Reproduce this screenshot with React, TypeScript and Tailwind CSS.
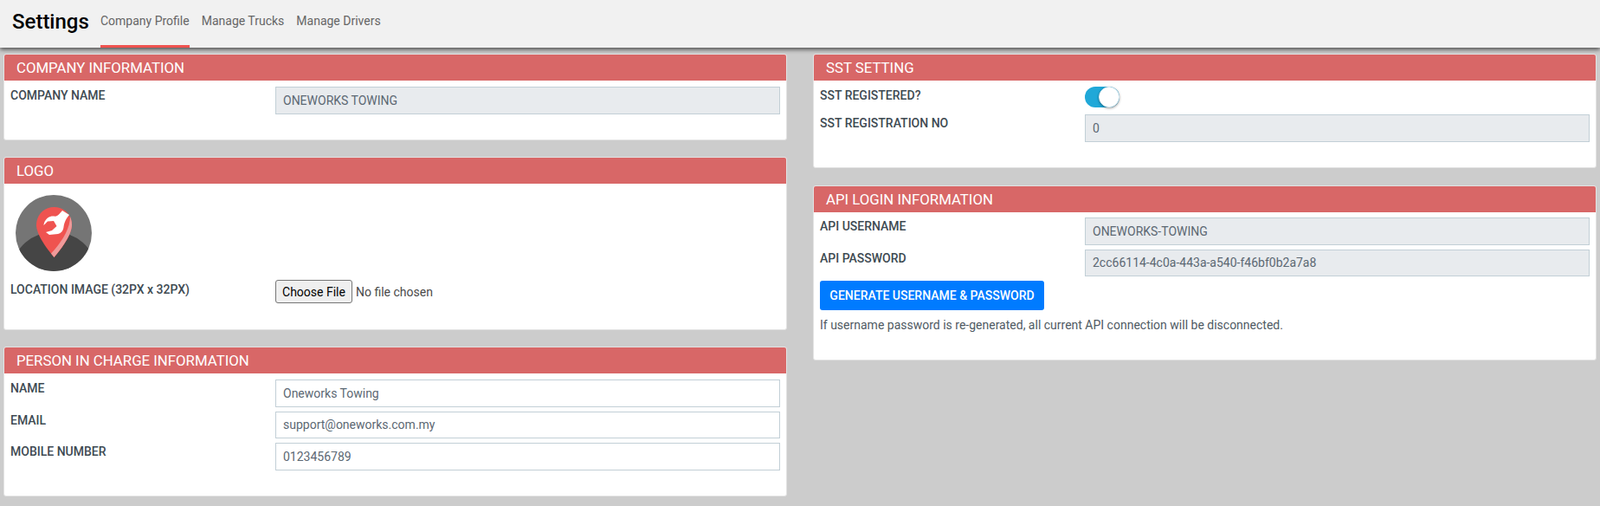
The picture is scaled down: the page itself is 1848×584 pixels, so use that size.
import React from "react";

const inputBase =
  "block w-full h-[31.5px] border border-[#c2cfd6] px-2 text-[14px] text-[#5c6873] outline-none";
const labelBase = "w-[306px] shrink-0 pt-[1px] text-[14px] leading-[19px] font-medium text-[#3e4a52]";

function Card({ title, children, className }: { title: string; children: React.ReactNode; className: string }) {
  return (
    <section className={`bg-white rounded-[3px] border border-[#e3e3e3] overflow-hidden ${className}`}>
      <h2 className="h-[30px] bg-[#d86767] text-white text-[16.8px] leading-[30px] pl-[14px] font-normal">{title}</h2>
      {children}
    </section>
  );
}

function Field({
  label,
  value,
  disabled,
  className,
}: {
  label: string;
  value: string;
  disabled?: boolean;
  className?: string;
}) {
  return (
    <div className={`flex pl-[7px] pr-[7px] ${className ?? ""}`}>
      <label className={labelBase}>{label}</label>
      <input
        readOnly
        value={value}
        className={`${inputBase} ${disabled ? "bg-[#e8ebee]" : "bg-white"}`}
      />
    </div>
  );
}

function LogoMark() {
  return (
    <svg viewBox="0 0 88 88" className="w-[88px] h-[88px] block">
      <defs>
        <clipPath id="disc">
          <circle cx="44" cy="44" r="44" />
        </clipPath>
      </defs>
      <g clipPath="url(#disc)">
        <rect width="88" height="88" fill="#757575" />
        <ellipse cx="44.5" cy="84" rx="47" ry="41" fill="#454545" />
      </g>
      <path
        d="M44.5 14C33 14 24 23 24 34.500C24 46 36 62 44.500 72C53 62 65 46 65 34.500C65 23 56 14 44.500 14Z"
        fill="#ef5350"
      />
      <path d="M44.500 72C53 62 65 46 65 34.500C65 31 64.300 28 63 25C63 40 52 56 41 67.500Z" fill="#ef9a9a" />
      <path
        d="M54 18L62 23C58 28 56 32 55.500 37C55 41 53 44 49 45L39 46L35 43L42 41L47.500 36L44 30L37 30.500L32.500 35C33 29 38 24 44 24.500C47 25 48.500 24 50 22.500Z"
        fill="#ffffff"
      />
    </svg>
  );
}

export default function App() {
  return (
    <div className="min-h-[584px] bg-[#cccccc] font-['Roboto',sans-serif]">
      <header className="h-[55px] bg-[#f1f1f1] flex items-stretch pl-[14px] shadow-[0_2px_5px_rgba(0,0,0,0.65)] relative">
        <h1 className="w-[102px] text-[24px] font-medium text-black leading-[50px]">Settings</h1>
        <nav className="flex gap-[14px] text-[14px] text-[#666666]">
          <a className="leading-[48px] border-b-[3px] border-[#ef5350]">Company Profile</a>
          <a className="leading-[48px]">Manage Trucks</a>
          <a className="leading-[48px]">Manage Drivers</a>
        </nav>
      </header>

      <main className="grid grid-cols-[905px_905px] gap-x-[30px] pl-[4px] pt-[7px]">
        <div className="flex flex-col gap-[19px]">
          <Card title="COMPANY INFORMATION" className="h-[100px]">
            <Field label="COMPANY NAME" value="ONEWORKS TOWING" disabled className="pt-[7px]" />
          </Card>

          <Card title="LOGO" className="h-[200px]">
            <div className="pl-[13px] pt-[13px]">
              <LogoMark />
            </div>
            <div className="flex pl-[7px] pt-[10px]">
              <label className={`${labelBase} pt-[2px]`}>LOCATION IMAGE (32PX x 32PX)</label>
              <input
                type="file"
                className="text-[14px] leading-[27px] text-[#4a4a4a] file:h-[27px] file:w-[89px] file:mr-[4px] file:border file:border-[#767676] file:rounded-[3px] file:bg-[#efefef] file:text-black file:text-[14px]"
              />
            </div>
          </Card>

          <Card title="PERSON IN CHARGE INFORMATION" className="h-[173px]">
            <div className="flex flex-col gap-[5px] pt-[7px]">
              <Field label="NAME" value="Oneworks Towing" />
              <Field label="EMAIL" value="support@oneworks.com.my" />
              <Field label="MOBILE NUMBER" value="0123456789" />
            </div>
          </Card>
        </div>

        <div className="flex flex-col gap-[20px]">
          <Card title="SST SETTING" className="h-[132px]">
            <div className="flex pl-[7px] pt-[7px]">
              <label className={labelBase}>SST REGISTERED?</label>
              <span className="relative w-[40px] h-[24px] rounded-full bg-[#20a8d8]">
                <span className="absolute right-0 top-0 w-[24px] h-[24px] rounded-full bg-white border border-[#dfeef5] shadow-[0_1px_3px_rgba(0,0,0,0.4)]" />
              </span>
            </div>
            <Field label="SST REGISTRATION NO" value="0" disabled className="pt-[8px]" />
          </Card>

          <Card title="API LOGIN INFORMATION" className="h-[202px]">
            <div className="flex flex-col gap-[5px] pt-[6px]">
              <Field label="API USERNAME" value="ONEWORKS-TOWING" disabled />
              <Field label="API PASSWORD" value="2cc66114-4c0a-443a-a540-f46bf0b2a7a8" disabled />
            </div>
            <div className="pl-[7px] pt-[5px]">
              <button className="h-[34px] w-[259px] rounded-[3px] bg-[#007bff] text-white text-[14px] font-medium">
                GENERATE USERNAME &amp; PASSWORD
              </button>
              <p className="mt-[8px] text-[14px] leading-[19px] text-[#4f5a63]">
                If username password is re-generated, all current API connection will be disconnected.
              </p>
            </div>
          </Card>
        </div>
      </main>
    </div>
  );
}
